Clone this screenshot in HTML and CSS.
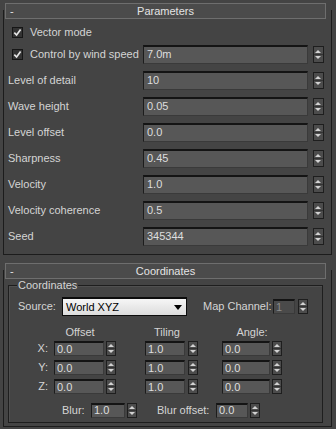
FILE: index.html
```html
<!DOCTYPE html>
<html lang="en">
<head>
    <meta charset="UTF-8" />
    <title>Parameters</title>
    <link rel="stylesheet" href="styles.css">
</head>
<body>
    <div class="rollout">
        <div class="roll-head"><span class="roll-sign">-</span><span class="roll-title">Parameters</span></div>
        <div class="roll-body params">
            <div class="row row-check">
                <span class="check"><svg width="9" height="9" viewBox="0 0 9 9"><path d="M1.3 4.6 L3.6 7 L7.6 1.6" fill="none" stroke="#e6e6e6" stroke-width="1.7"/></svg></span>
                <span class="label">Vector mode</span>
            </div>
            <div class="row">
                <span class="check"><svg width="9" height="9" viewBox="0 0 9 9"><path d="M1.3 4.6 L3.6 7 L7.6 1.6" fill="none" stroke="#e6e6e6" stroke-width="1.7"/></svg></span>
                <span class="label">Control by wind speed</span>
                <span class="field">7.0m</span><span class="spin"></span>
            </div>
            <div class="row"><span class="label">Level of detail</span><span class="field">10</span><span class="spin"></span></div>
            <div class="row"><span class="label">Wave height</span><span class="field">0.05</span><span class="spin"></span></div>
            <div class="row"><span class="label">Level offset</span><span class="field">0.0</span><span class="spin"></span></div>
            <div class="row"><span class="label">Sharpness</span><span class="field">0.45</span><span class="spin"></span></div>
            <div class="row"><span class="label">Velocity</span><span class="field">1.0</span><span class="spin"></span></div>
            <div class="row"><span class="label">Velocity coherence</span><span class="field">0.5</span><span class="spin"></span></div>
            <div class="row"><span class="label">Seed</span><span class="field">345344</span><span class="spin"></span></div>
        </div>
    </div>

    <div class="rollout second">
        <div class="roll-head"><span class="roll-sign">-</span><span class="roll-title">Coordinates</span></div>
        <div class="roll-body coords">
            <div class="group">
                <span class="group-label">Coordinates</span>
                <div class="src-row">
                    <span class="src-label">Source:</span>
                    <span class="select">World XYZ</span>
                    <span class="map-label">Map Channel:</span>
                    <span class="field small dim w-map">1</span><span class="spin small"></span>
                </div>
                <div class="xyz-head">
                    <span class="h-off">Offset</span>
                    <span class="h-til">Tiling</span>
                    <span class="h-ang">Angle:</span>
                </div>
                <div class="xyz-row">
                    <span class="axis">X:</span>
                    <span class="field small w-off">0.0</span><span class="spin small"></span>
                    <span class="field small w-til">1.0</span><span class="spin small"></span>
                    <span class="field small w-ang">0.0</span><span class="spin small"></span>
                </div>
                <div class="xyz-row">
                    <span class="axis">Y:</span>
                    <span class="field small w-off">0.0</span><span class="spin small"></span>
                    <span class="field small w-til">1.0</span><span class="spin small"></span>
                    <span class="field small w-ang">0.0</span><span class="spin small"></span>
                </div>
                <div class="xyz-row">
                    <span class="axis">Z:</span>
                    <span class="field small w-off">0.0</span><span class="spin small"></span>
                    <span class="field small w-til">1.0</span><span class="spin small"></span>
                    <span class="field small w-ang">0.0</span><span class="spin small"></span>
                </div>
                <div class="blur-row">
                    <span class="blur-label">Blur:</span>
                    <span class="field small w-blur">1.0</span><span class="spin small"></span>
                    <span class="blur-off-label">Blur offset:</span>
                    <span class="field small w-bluroff">0.0</span><span class="spin small"></span>
                </div>
            </div>
        </div>
    </div>
</body>
</html>
```

FILE: styles.css
```css
html, body{
    margin: 0;
    padding: 0;
}
body{
    width: 336px;
    height: 429px;
    overflow: hidden;
    background: #444;
    color: #d4d4d4;
    font-family: "Liberation Sans", Arial, sans-serif;
    font-size: 11px;
    line-height: 13px;
}

/* rollout frame */
.rollout{
    margin: 3px 4px 0 3px;
}
.rollout.second{
    margin-top: 8px;
}
.roll-head{
    position: relative;
    height: 16px;
    box-sizing: border-box;
    margin: 0 6px 0 2px;
    border: 1px solid #6e6e6e;
    background: #4b4b4b;
    color: #e4e4e4;
    display: flex;
    align-items: center;
}
.roll-sign{
    width: 0;
    padding-left: 4px;
    overflow: visible;
}
.roll-title{
    flex: 1;
    text-align: center;
    padding-right: 4px;
}
.roll-body{
    margin-top: -9px;
    border: 1px solid #1c1c1c;
    border-top: 0;
}
.params{
    padding: 13px 7px 5px 4px;
}

/* rows */
.row{
    display: flex;
    align-items: center;
    height: 26px;
}
.row-check{
    height: 18px;
}
.label{
    flex: 1;
}
.check{
    width: 11px;
    height: 11px;
    box-sizing: border-box;
    margin: 0 7px 0 4px;
    border: 1px solid #161616;
    background: #333;
    display: flex;
    align-items: center;
    justify-content: center;
}
.check svg{
    display: block;
}
.field{
    width: 165px;
    height: 19px;
    box-sizing: border-box;
    padding-left: 3px;
    background: #575757;
    border-top: 2px solid #141414;
    border-left: 1px solid #1c1c1c;
    border-right: 1px solid #3a3a3a;
    border-bottom: 1px solid #3a3a3a;
    color: #dedede;
    display: flex;
    align-items: center;
}
.spin{
    position: relative;
    width: 11px;
    height: 17px;
    box-sizing: border-box;
    margin-left: 5px;
    border: 1px solid #1e1e1e;
    background: #4c4c4c linear-gradient(#333, #333) center / 100% 1px no-repeat;
}
.spin::before,
.spin::after{
    content: "";
    position: absolute;
    left: 1px;
    border-left: 3px solid transparent;
    border-right: 3px solid transparent;
}
.spin::before{
    top: 3px;
    border-bottom: 3px solid #d2d2d2;
}
.spin::after{
    bottom: 3px;
    border-top: 3px solid #d2d2d2;
}

/* coordinates */
.coords{
    padding: 15px 8px 3px 4px;
}
.group{
    position: relative;
    border: 1px solid #1e1e1e;
    box-shadow: inset 1px 1px 0 #505050;
    padding: 11px 0 2px 0;
}
.group-label{
    position: absolute;
    left: 8px;
    top: -7px;
    padding: 0 1px;
    background: #444;
}
.src-row{
    display: flex;
    align-items: center;
    height: 19px;
    padding-left: 9px;
}
.src-label{
    width: 44px;
}
.select{
    position: relative;
    width: 125px;
    height: 19px;
    box-sizing: border-box;
    padding-left: 3px;
    border: 1px solid #0c0c0c;
    border-top-width: 2px;
    background: linear-gradient(#f6f6f6, #dcdcdc);
    color: #000;
    display: flex;
    align-items: center;
}
.select::after{
    content: "";
    position: absolute;
    right: 4px;
    top: 6px;
    border-left: 4px solid transparent;
    border-right: 4px solid transparent;
    border-top: 5px solid #000;
}
.map-label{
    width: 70px;
    margin-left: 16px;
}
.field.small{
    height: 15px;
    border-top-width: 2px;
    padding-left: 2px;
}
.spin.small{
    width: 10px;
    height: 15px;
    margin-left: 2px;
}
.spin.small::before{
    top: 2px;
    left: 1px;
}
.spin.small::after{
    bottom: 2px;
    left: 1px;
}
.w-map{
    width: 22px;
}
.w-map + .spin{
    margin-left: 3px;
}
.dim{
    background: #4a4a4a;
    color: #8a8a8a;
}
.xyz-head{
    display: flex;
    height: 13px;
    margin-top: 10px;
}
.xyz-head span{
    text-align: center;
}
.h-off{
    width: 50px;
    margin-left: 46px;
}
.h-til{
    width: 40px;
    margin-left: 42px;
}
.h-ang{
    width: 50px;
    margin-left: 40px;
}
.xyz-row{
    display: flex;
    align-items: center;
    height: 19px;
}
.axis{
    width: 45px;
    box-sizing: border-box;
    padding-right: 6px;
    text-align: right;
}
.w-off{
    width: 50px;
}
.w-til{
    width: 40px;
    margin-left: 29px;
}
.w-til + .spin{
    margin-left: 3px;
}
.w-ang{
    width: 48px;
    margin-left: 24px;
}
.blur-row{
    display: flex;
    align-items: center;
    height: 20px;
    margin-top: 4px;
    padding-left: 53px;
}
.blur-label{
    width: 29px;
}
.w-blur{
    width: 34px;
}
.blur-off-label{
    width: 59px;
    margin-left: 20px;
}
.w-bluroff{
    width: 32px;
}
```
